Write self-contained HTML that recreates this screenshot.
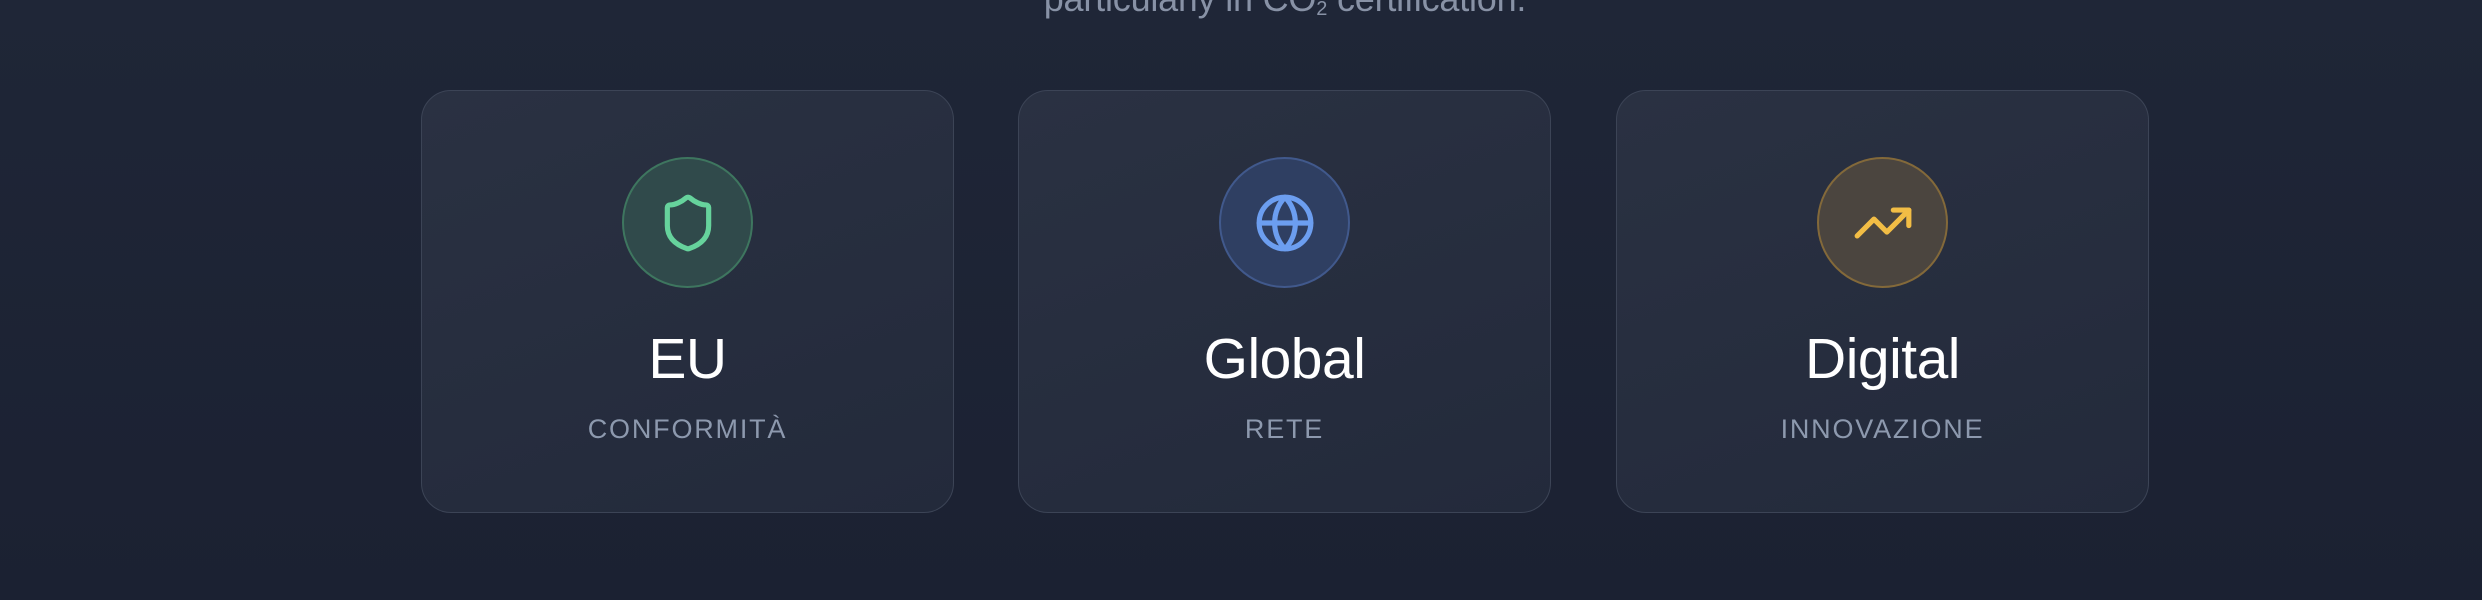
<!DOCTYPE html>
<html><head><meta charset="utf-8"><style>
html,body{margin:0;padding:0}
body{width:2482px;height:600px;overflow:hidden;position:relative;background:linear-gradient(180deg,#1f2637 0%,#1b2132 100%);font-family:"Liberation Sans",sans-serif}
.top{position:absolute;left:985px;top:-21px;width:600px;text-align:center;font-size:36px;line-height:40px;color:#8892a6;white-space:nowrap;letter-spacing:-0.2px}
.card{position:absolute;top:90px;width:531px;height:421px;border:1.5px solid #3c4456;border-radius:30px;background:linear-gradient(160deg,#2a3142 0%,#232a3b 100%)}
.circ{position:absolute;left:200px;top:66px;width:131px;height:131px;border-radius:50%;box-sizing:border-box;display:flex;align-items:center;justify-content:center}
.t{position:absolute;left:0;right:0;top:233px;text-align:center;font-size:57px;line-height:70px;color:#fff;letter-spacing:-0.5px}
.s{position:absolute;left:0;right:0;top:320px;text-align:center;font-size:27px;letter-spacing:1.8px;line-height:36px;color:#8d99ae}
</style></head><body>
<div class="top">particularly in CO<sub style="font-size:20px;vertical-align:-4px">2</sub> certification.</div>

<div class="card" style="left:421px">
<div class="circ" style="background:#304a4b;border:2px solid #3e765f">
<svg width="62" height="62" viewBox="0 0 24 24" fill="none" stroke="#66d39c" stroke-width="2" stroke-linecap="round" stroke-linejoin="round"><path d="M20 13c0 5-3.5 7.5-7.66 8.95a1 1 0 0 1-.67-.01C7.5 20.5 4 18 4 13V6a1 1 0 0 1 1-1c2 0 4.5-1.2 6.24-2.72a1.170 1.17 0 0 1 1.52 0C14.51 3.81 17 5 19 5a1 1 0 0 1 1 1z"/></svg>
</div>
<div class="t">EU</div><div class="s">CONFORMITÀ</div>
</div>

<div class="card" style="left:1018px">
<div class="circ" style="background:#2f3f62;border:2px solid #41598c">
<svg width="62" height="62" viewBox="0 0 24 24" fill="none" stroke="#6c9ef0" stroke-width="2" stroke-linecap="round" stroke-linejoin="round"><circle cx="12" cy="12" r="10"/><path d="M12 2a14.5 14.5 0 0 0 0 20 14.5 14.5 0 0 0 0-20"/><path d="M2 12h20"/></svg>
</div>
<div class="t">Global</div><div class="s">RETE</div>
</div>

<div class="card" style="left:1616px">
<div class="circ" style="background:#4b453f;border:2px solid #83693a">
<svg width="62" height="62" viewBox="0 0 24 24" fill="none" stroke="#f2bd45" stroke-width="2" stroke-linecap="round" stroke-linejoin="round"><path d="M22 7l-8.5 8.5-5-5L2 17"/><path d="M16 7h6v6"/></svg>
</div>
<div class="t">Digital</div><div class="s">INNOVAZIONE</div>
</div>
</body></html>
